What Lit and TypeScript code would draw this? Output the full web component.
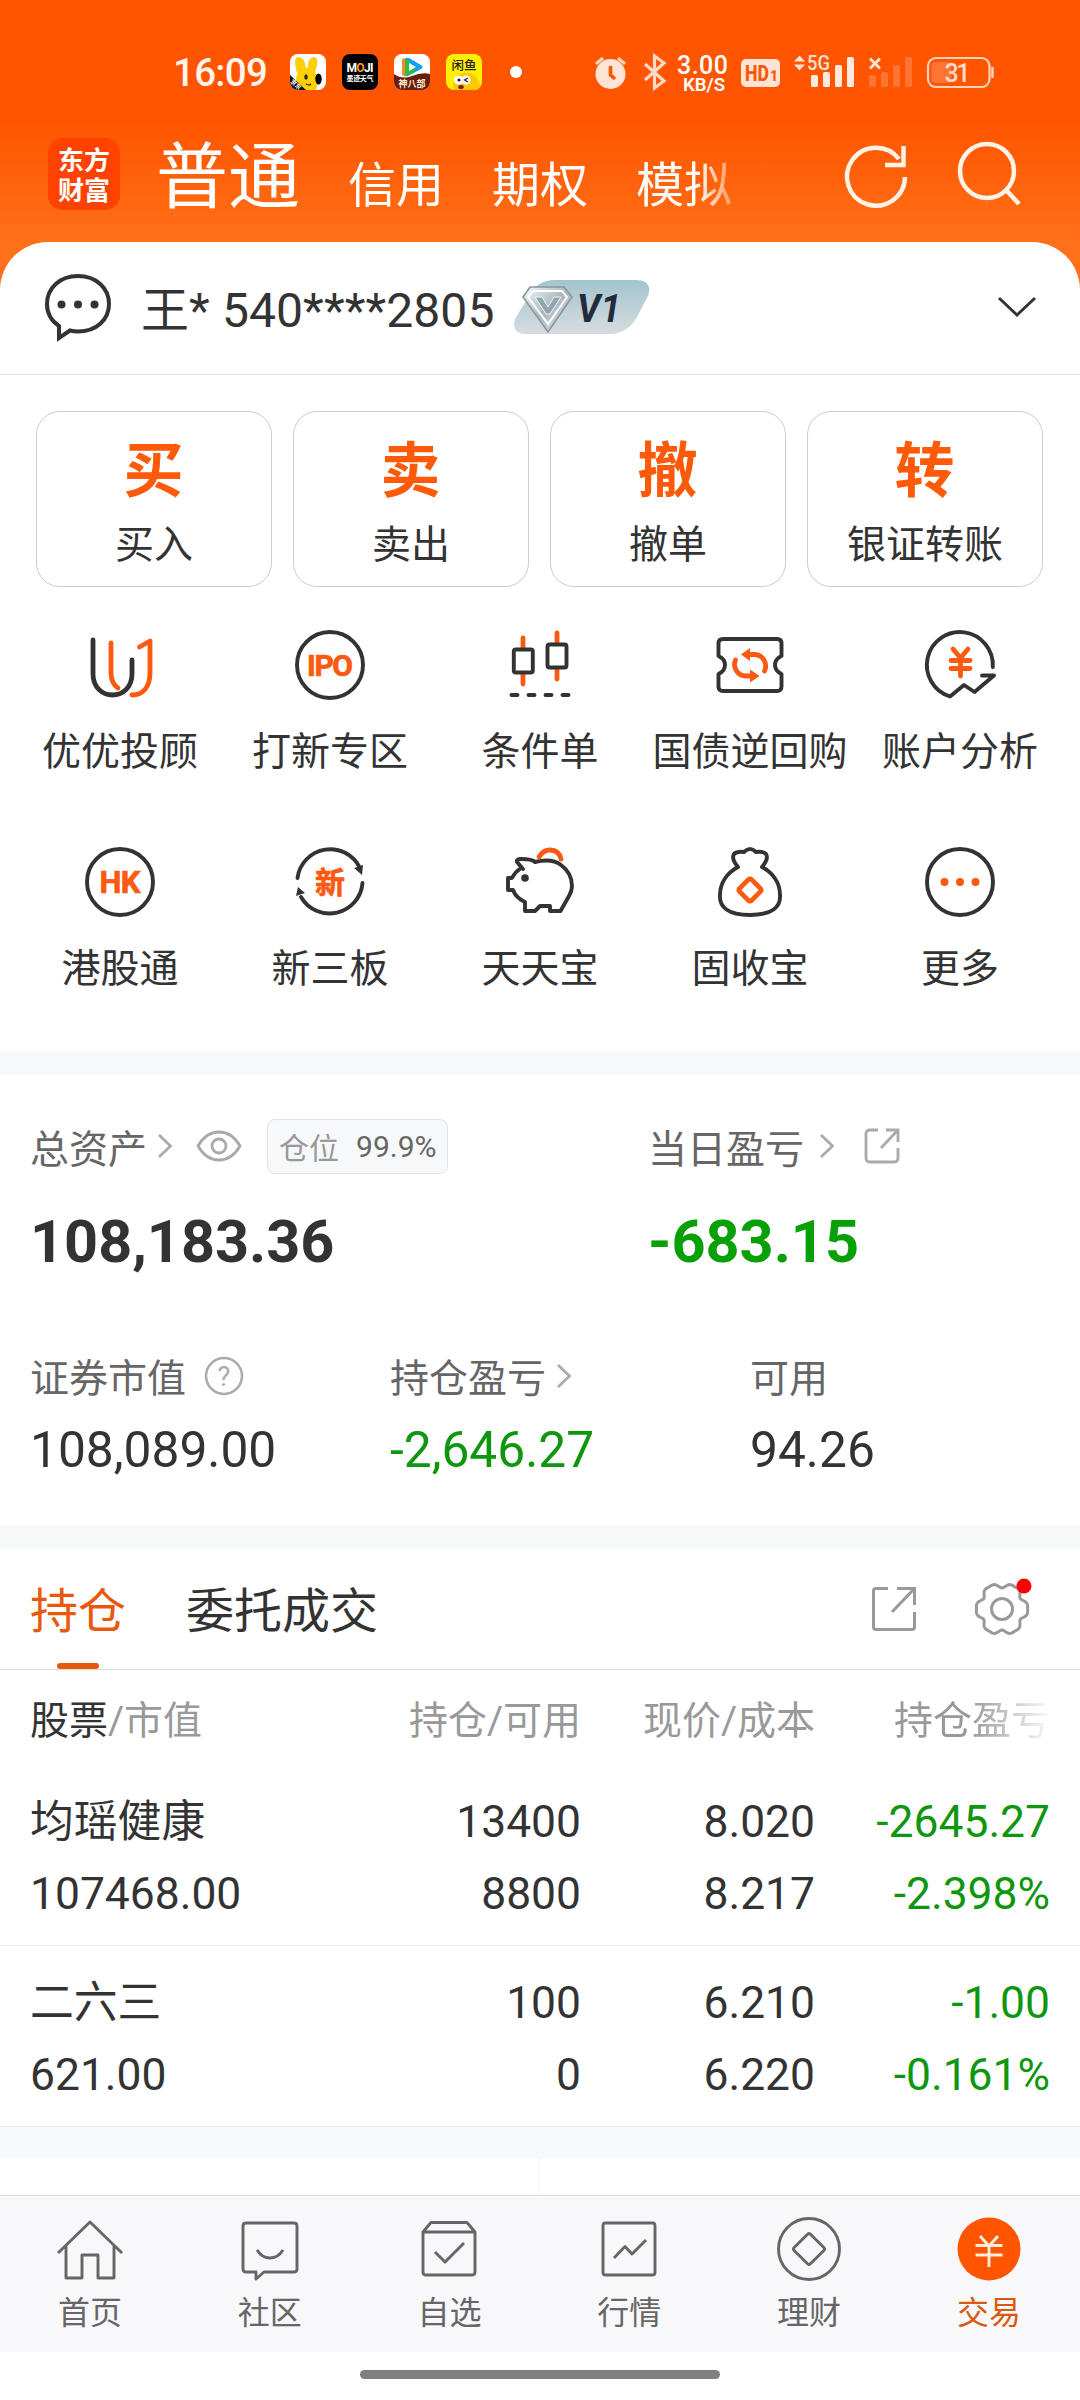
import { LitElement, html, css, svg } from "lit";
import { customElement } from "lit/decorators.js";
import { classMap } from "lit/directives/class-map.js";

const gearPath = (() => {
  const pts: string[] = [];
  for (let i = 0; i < 120; i++) {
    const a = (i / 120) * Math.PI * 2;
    const r = 24.2 + 2.3 * Math.cos(6 * a) - 0.9 * Math.cos(12 * a);
    pts.push(`${(r * Math.cos(a)).toFixed(2)} ${(r * Math.sin(a)).toFixed(2)}`);
  }
  return "M" + pts.join("L") + "Z";
})();

const ring = svg`<circle class="d" r="33"/>`;

const SERVICES = [
  {
    label: "优优投顾",
    icon: svg`<path class="d w" d="M-27-25V9C-27 22-18 30-7.500 30S12 22 12 9V-5"/>
      <path class="o w" d="M-9-22V8Q-9 18-2 23M19.500-18L30-24V8C30 22 23 30 12 30"/>`,
  },
  { label: "打新专区", icon: svg`${ring}<text class="t" y="11" font-size="30" textLength="46">IPO</text>` },
  {
    label: "条件单",
    icon: svg`<path class="o w" d="M-17-27V-17M-17 9V19M17-32V-22M17 4V14"/>
      <rect class="d" x="-26.200" y="-15.500" width="19" height="23" rx="2"/>
      <rect class="d" x="7.500" y="-20.500" width="19" height="23" rx="2"/>
      <path class="d" d="M-28.500 30H-22.500M-11.500 30H-5.500M5.500 30H11.500M22.500 30H28.500"/>`,
  },
  {
    label: "国债逆回购",
    icon: svg`<path class="d" d="M-27-26H27Q31.500-26 31.500-21.500V-9Q25-6 25 0T31.500 9V21.500Q31.500 26 27 26H-27Q-31.500 26-31.500 21.500V9Q-25 6-25 0T-31.500-9V-21.500Q-31.500-26-27-26Z"/>
      <path class="o w" d="M-3-10.500H4A11.500 11.500 0 0 1 14.500 6M-14.500-5A11.500 11.500 0 0 0-4 11H3"/>
      <path class="of" d="M-9-10.500L0-17V-4ZM9.500 11L0 4.500V17.500Z"/>`,
  },
  {
    label: "账户分析",
    icon: svg`<path class="d" d="M32.800 2A33 33 0 1 0-10 31.500L4 20L14.500 27L34 10.500H22"/>
      <path class="o w" d="M-7-16L.5-7L8-16M.5-7V11M-9-4.500H10M-9 3.500H10"/>`,
  },
  { label: "港股通", icon: svg`${ring}<text class="t" y="11" font-size="31" textLength="41">HK</text>` },
  {
    label: "新三板",
    icon: svg`<path class="d" d="M-32.500-4A33 33 0 0 1 30-14M32.500 1A33 33 0 0 1-29 15"/>
      <path class="df" d="M24-14L33-17L32-7ZM-34 14L-32 5L-25 11Z"/>
      <text class="t" y="11" font-size="30">新</text>`,
  },
  {
    label: "天天宝",
    icon: svg`<path class="d" d="M-17-13L-23-20Q-24-23-19-23Q-8-23-5-20Q12-24 21-17Q32-9 32 4Q32 9 29 14L20.500 29H10V24H0L-5 29H-15V20Q-24 16-27 8H-32V-4H-28Q-25-10-19-14"/>
      <circle class="df" cx="-15" cy="-4" r="3.800"/>
      <path class="o w" d="M-1-25Q3-32 10-32Q19-32 21-23"/>`,
  },
  {
    label: "固收宝",
    icon: svg`<path class="d" d="M-12-15Q-19-23-16-28Q-13-31-6-30Q0-36 6-30Q13-31 16-28Q19-23 12-15M-12-15C-23-9-30 1-30 13C-31 25-22 33 0 33S31 25 30 13C30 1 23-9 12-15"/>
      <rect class="o w" x="-8.500" y="-8.500" width="17" height="17" rx="2" transform="translate(0 8) rotate(45)"/>`,
  },
  {
    label: "更多",
    icon: svg`${ring}<g class="of"><circle cx="-15.500" r="4"/><circle r="4"/><circle cx="15.500" r="4"/></g>`,
  },
];

const TRADES = [
  ["买", "买入"],
  ["卖", "卖出"],
  ["撤", "撤单"],
  ["转", "银证转账"],
];

const HOLDINGS = [
  { name: "均瑶健康", value: "107468.00", qty: "13400", free: "8800", price: "8.020", cost: "8.217", pl: "-2645.27", pct: "-2.398%" },
  { name: "二六三", value: "621.00", qty: "100", free: "0", price: "6.210", cost: "6.220", pl: "-1.00", pct: "-0.161%" },
];

const TABS = [
  { label: "首页", icon: svg`<path d="M-32 4L0-27L32 4M-24-3V29H-8V6H8V29H24V-3"/>` },
  { label: "社区", icon: svg`<path d="M-24-26H24Q27-26 27-23V20Q27 23 24 23H-6L-14 30V23H-24Q-27 23-27 20V-23Q-27-26-24-26ZM-13 1Q-8 9 0 9T13 1"/>` },
  { label: "自选", icon: svg`<path d="M-26-17L-18-26.500H18L26-17V23Q26 26 23 26H-23Q-26 26-26 23ZM-26-17H26M-14 3L-4 13L15-6"/>` },
  { label: "行情", icon: svg`<rect x="-26" y="-26" width="52" height="52" rx="2.500"/><path d="M-15 9L-4-2.500L3 5L17-9"/>` },
  { label: "理财", icon: svg`<circle r="30.500"/><rect x="-11.500" y="-11.500" width="23" height="23" rx="2" transform="rotate(45)"/>` },
  { label: "交易", active: true, icon: svg`<circle class="fill" r="31.500"/><path class="yen" d="M-9-13L0-3L9-13M0-3V18M-13.500-3.500H13.500M-13.500 6H13.500"/>` },
];

@customElement("app-root")
export class AppRoot extends LitElement {
  static styles = css`
    :host {
      display: block;
      width: 1080px;
      height: 2400px;
      overflow: hidden;
      background: #fff;
      color: #333;
      font-family: Roboto, "Noto Sans CJK SC", sans-serif;
      font-size: 39px;
      font-weight: 400;
      white-space: nowrap;
    }
    * { box-sizing: border-box; }
    svg { display: block; flex: none; fill: none; overflow: visible; }
    .top {
      height: 300px;
      background: linear-gradient(#ff5500 0, #ff5500 122px, #ff7019 242px);
      color: #fff;
    }
    .status { height: 124px; padding: 42px 83px 22px 173px; display: flex; align-items: center; }
    .time { font-size: 38.500px; font-weight: 500; letter-spacing: -0.700px; width: 117px; color: #fff4ec; }
    .apps { display: flex; gap: 16px; }
    .dot { width: 12px; height: 12px; border-radius: 50%; background: #fff; margin-left: 28px; }
    .sys { margin-left: auto; }
    .nav { height: 118px; display: flex; align-items: center; padding-left: 48px; }
    .logo {
      width: 72px; height: 72px; margin-top: -18px; border-radius: 15px; background: #ff4200;
      font: 700 26px/30px "Noto Sans CJK SC", sans-serif; text-align: center; padding-top: 6px;
      white-space: normal;
    }
    .modes { display: flex; align-items: baseline; gap: 48px; margin-left: 36px; width: 594px; height: 118px; padding-top: 9px;
      -webkit-mask-image: linear-gradient(90deg, #000 540px, transparent 595px);
      mask-image: linear-gradient(90deg, #000 540px, transparent 595px); }
    .modes span { font-size: 48px; line-height: 90px; }
    .modes .on { font-size: 72px; }
    .tools { display: flex; gap: 39px; margin: -14px 0 0 90px; stroke: #fff3e6; stroke-width: 4.500px; }
    .sheet { margin-top: -58px; border-radius: 48px 48px 0 0; background: #fff; position: relative; }
    .account { height: 133px; border-bottom: 1px solid #e2e2e4; padding: 0 43px 2px 43px; display: flex; align-items: center; font-size: 48px; }
    .account .id { margin-left: 28px; width: 372px; letter-spacing: 0.100px; padding-bottom: 2px; }
    .account .down { margin-left: auto; }
    .trades { display: grid; grid-template-columns: repeat(4, 236px); column-gap: 21px; padding: 36px 36px 0; }
    .trade { height: 176px; border: 1.500px solid #ccc; border-radius: 24px; text-align: center; }
    .trade b { display: block; font-size: 60px; line-height: 78px; color: #ff5a0a; margin-top: 21px; font-weight: 700; padding-right: 1px; }
    .trade span { display: block; line-height: 50px; margin-top: 9px; }
    .services { display: grid; grid-template-columns: repeat(5, 210px); padding: 42px 15px 0; height: 464px; }
    .service { height: 217px; display: flex; flex-direction: column; align-items: center; }
    .service span { line-height: 50px; margin-top: 26px; }
    .d { stroke: #333; stroke-width: 3.900px; stroke-linecap: round; stroke-linejoin: round; }
    .o { stroke: #fb5a10; stroke-width: 4px; stroke-linecap: round; stroke-linejoin: round; }
    .w { stroke-width: 4.800px; }
    .of, .t { fill: #fb5a10; }
    .df { fill: #333; }
    .t { font-weight: 700; text-anchor: middle; stroke: #fb5a10; stroke-width: 0.700px; stroke-linejoin: round; }
    .band { height: 24px; background: #f7f8fa; }
    .assets { height: 450px; color: #666; }
    .chev { stroke: #aaa; stroke-width: 2.800px; }
    .row { display: flex; align-items: center; }
    .totals { display: grid; grid-template-columns: 618px 1fr; padding: 41px 0 0 30px; }
    .totals .row { height: 60px; }
    .eye { margin-left: 33px; }
    .tag { height: 55px; width: 181px; border: 1.500px solid #e3e4e7; border-radius: 8px; background: #f7f8fa; font-size: 30px; color: #666; display: flex; align-items: center; gap: 17px; margin-left: 25px; padding-left: 11px; }
    .tag i { font-style: normal; color: #999; }
    .big { font-size: 59.400px; font-weight: 700; line-height: 70px; margin-top: 31px; color: #333; }
    .loss { color: #0f960f; }
    .big.loss { color: #07a007; }
    .facts { display: grid; grid-template-columns: 360px 360px 1fr; padding: 68px 0 0 30px; }
    .facts .row { height: 60px; }
    .facts .num { font-size: 49.700px; line-height: 60px; margin-top: 15px; color: #333; }
    .facts .num.loss { color: #0f960f; }
    .tabs { height: 121px; border-bottom: 1.500px solid #dedede; padding: 0 50px 0 30px; display: flex; align-items: center; font-size: 48px; gap: 60px; }
    .tabs .cur { color: #e8590c; height: 120px; line-height: 126px; display: flex; flex-direction: column; align-items: center; }
    .tabs .cur::after { content: ""; width: 42px; height: 6px; border-radius: 3px; background: #e8590c; margin-top: -12px; }
    .tabs .other { height: 120px; line-height: 126px; }
    .tabs .acts { margin-left: auto; display: flex; gap: 57px; align-items: center; stroke: #999; stroke-width: 3px; }
    .cols { display: grid; grid-template-columns: 251px 300px 234px 235px; padding: 0 30px; text-align: right; }
    .cols > :first-child { text-align: left; }
    .head { height: 101px; line-height: 102px; color: #999; }
    .head b { font-weight: 400; color: #333; }
    .fade { -webkit-mask-image: linear-gradient(90deg, #000 155px, transparent 240px); mask-image: linear-gradient(90deg, #000 155px, transparent 240px); }
    .hold { height: 175px; font-size: 44.400px; line-height: 72px; padding-top: 15px; border-bottom: 1.500px solid #e9e9eb; }
    .hold + .hold { height: 181px; padding-top: 21px; }
    .hold .name { font-size: 43.800px; }
    .band.wide { height: 31px; }
    .peek { height: 37px; width: 540px; border-right: 1px solid #f4f4f4; }
    .bar { height: 157px; background: #f8f8fa; border-top: 1.500px solid #dcdddf; display: grid; grid-template-columns: repeat(6, 179.800px); padding-top: 17px; font-size: 32px; color: #666; }
    .bar div { display: flex; flex-direction: column; align-items: center; }
    .bar svg { stroke: #666; stroke-width: 2.900px; stroke-linejoin: round; }
    .bar span { line-height: 40px; margin-top: 8px; }
    .bar .active { color: #d9590f; }
    .bar .fill { fill: #ff5500; stroke: none; }
    .bar .yen { stroke: #ffeede; }
    .home { width: 360px; height: 9px; border-radius: 5px; background: #808080; margin: 18px auto 0; }
  `;

  private renderStatus() {
    return html`<div class="status">
      <div class="time">16:09</div>
      <div class="apps">
        <svg width="36" height="36" viewBox="0 0 36 36">
          <clipPath id="a"><rect width="36" height="36" rx="8"/></clipPath>
          <g clip-path="url(#a)"><rect width="36" height="36" fill="#fff"/>
            <path fill="#ffcf08" d="M8 36Q4 26 7.500 20Q2 3 9 3Q14.500 3 16 14H17.500Q18 3 24 3Q30 4 25 18Q30 26 26 36Z"/>
            <ellipse cx="28.500" cy="25" rx="3.200" ry="5.500" fill="#000"/><ellipse cx="16" cy="23" rx="1.700" ry="2.800" fill="#222"/>
            <path d="M16 30Q19 32 21 30" stroke="#222" stroke-width="1.200"/>
            <path d="M0 21L16 36H0Z" fill="#111"/><text x="-3" y="4" font-size="6" font-weight="700" fill="#fff" transform="translate(5 27) rotate(43)">京东</text></g>
        </svg>
        <svg width="36" height="36" viewBox="0 0 36 36">
          <rect width="36" height="36" rx="8" fill="#000"/>
          <text x="4.500" y="18" font-size="12" font-weight="700" fill="#fff" textLength="27">M<tspan fill="#f79a22">O</tspan>JI</text>
          <text x="4.500" y="27" font-size="7" font-weight="700" fill="#fff" textLength="27">墨迹天气</text>
        </svg>
        <svg width="36" height="36" viewBox="0 0 36 36">
          <clipPath id="b"><rect width="36" height="36" rx="8"/></clipPath>
          <g clip-path="url(#b)"><rect width="36" height="36" fill="#fff"/>
            <path d="M8 6Q8 3 12 5V22Q8 23 8 19Z" fill="#ff8a1e"/>
            <path d="M11 5Q12 3 15 4L27 11Q30 13 27 15L14 22Q11 23 11 20Z" fill="#18a0f0"/>
            <path d="M11 6V20Q12 22 15 21L22 17L13 5Z" fill="#28c040"/><path d="M15 9V17L22 13Z" fill="#fff"/>
            <path d="M0 20Q8 26 18 22T36 20V36H0Z" fill="#6b1c10"/>
            <text x="4.500" y="33" font-size="9" font-weight="700" fill="#fff0d0">神八部</text></g>
        </svg>
        <svg width="36" height="36" viewBox="0 0 36 36">
          <clipPath id="c"><rect width="36" height="36" rx="8"/></clipPath>
          <g clip-path="url(#c)"><rect width="36" height="36" fill="#fff000"/>
            <path d="M8 36Q5 20 18 19Q30 18 33 28L36 36Z" fill="#ffc60a"/>
            <circle cx="12.500" cy="26" r="4.500" fill="#fff"/><circle cx="20" cy="26" r="4.500" fill="#fff"/>
            <circle cx="13" cy="26" r="1.600" fill="#222"/><path d="M22 24L18.500 26L22 28" stroke="#222" stroke-width="1.300"/><ellipse cx="15" cy="33" rx="2.800" ry="2" fill="#7a1d08"/>
            <text x="5.500" y="15.500" font-size="12.500" font-weight="500" fill="#222">闲鱼</text></g>
        </svg>
      </div>
      <div class="dot"></div>
      <svg class="sys" width="402" height="40" viewBox="595 52 402 40" font-weight="500">
        <circle cx="610.500" cy="74" r="15" fill="#ffe4d6"/><path d="M610.500 66V75L615 79" stroke="#ff5500" stroke-width="3.600"/>
        <path d="M596 64L603 58M625 64L618 58" stroke="#ffd2ba" stroke-width="3.200"/>
        <path d="M645 64L664 81L654.500 88V56L664 63L645 80" stroke="#ffd9c6" stroke-width="3.200"/>
        <text x="677" y="74" font-size="25" fill="#fff" textLength="51">3.00</text>
        <text x="683" y="90.500" font-size="19" font-weight="600" fill="#fff" textLength="42" lengthAdjust="spacingAndGlyphs">KB/S</text>
        <rect x="741" y="59" width="39" height="28" rx="5" fill="#ffe4d6"/>
        <text x="745" y="81" font-size="22" font-weight="800" fill="#ff5500" textLength="24" lengthAdjust="spacingAndGlyphs">HD</text>
        <text x="770" y="81" font-size="14" font-weight="800" fill="#ff5500">1</text>
        <path d="M794 61.500L799.500 55.500L805 61.500ZM794 64.500L799.500 70.500L805 64.500Z" fill="#ffe4d6"/>
        <text x="807" y="70" font-size="21" fill="#ffe0cf" textLength="23" lengthAdjust="spacingAndGlyphs">5G</text>
        <g fill="#ffe9dd"><rect x="811" y="75" width="7" height="12" rx="1.500"/><rect x="823" y="72" width="7" height="15" rx="1.500"/><rect x="835" y="65" width="7" height="22" rx="1.500"/><rect x="847" y="57" width="7" height="30" rx="1.500"/></g>
        <path d="M870 58.500L880 68.500M880 58.500L870 68.500" stroke="#ffe4d6" stroke-width="3"/>
        <g fill="#ff7333"><rect x="869" y="75" width="7" height="12" rx="1.500"/><rect x="881" y="72" width="7" height="15" rx="1.500"/><rect x="893" y="65" width="7" height="22" rx="1.500"/><rect x="905" y="57" width="7" height="30" rx="1.500"/></g>
        <rect x="931.500" y="62" width="20" height="21" rx="4" fill="#ff7333"/>
        <rect x="928" y="58" width="61.500" height="29" rx="8" stroke="#ffd2ba" stroke-width="2.200"/>
        <path d="M992.500 67V78" stroke="#ffd2ba" stroke-width="2.500"/>
        <text x="944.500" y="81.500" font-size="25" fill="#ffdccb" textLength="26">31</text>
      </svg>
    </div>`;
  }

  private renderShare(size: number) {
    return html`<svg width=${size} height=${size} viewBox="0 0 46 46">
      <path d="M17 2.500H5Q2.500 2.500 2.500 5V41Q2.500 43.500 5 43.500H41Q43.500 43.500 43.500 41V26M26 2.500H43.500V19M43 3L21 26"/>
    </svg>`;
  }

  render() {
    return html`
      <div class="top">
        ${this.renderStatus()}
        <div class="nav">
          <div class="logo">东方<br />财富</div>
          <div class="modes"><span class="on">普通</span><span>信用</span><span>期权</span><span>模拟</span></div>
          <div class="tools">
            <svg width="72" height="72" viewBox="-36 -36 72 72">
              <path d="M29 1A29 29 0 1 1 23-17M27.500-30V-11H9"/>
            </svg>
            <svg width="72" height="72" viewBox="-36 -36 72 72"><circle cx="0" cy="-5" r="27"/><path d="M19 14L32 28"/></svg>
          </div>
        </div>
      </div>
      <div class="sheet">
        <div class="account">
          <svg width="70" height="70" viewBox="0 0 70 70">
            <path d="M16 54V66L27 58.500Q31 59.500 35 59.500C53 59.500 66 48 66 32S53 4 35 4S4 16 4 32Q4 46 16 54Z" stroke="#333" stroke-width="4"/>
            <g fill="#333"><circle cx="18.500" cy="32.500" r="4"/><circle cx="35" cy="32.500" r="4"/><circle cx="51.500" cy="32.500" r="4"/></g>
          </svg>
          <div class="id">王* 540****2805</div>
          <svg width="138" height="56" viewBox="0 0 138 56">
            <defs>
              <linearGradient id="bg" x2="0" y2="1"><stop stop-color="#a3c5cf"/><stop offset="1" stop-color="#d6dcdf"/></linearGradient>
              <linearGradient id="dm" x2="1" y2="1"><stop stop-color="#f4fbfc"/><stop offset=".5" stop-color="#a9b7bd"/><stop offset="1" stop-color="#e4edf0"/></linearGradient>
            </defs>
            <path d="M42 1H124Q140 2 135 17L124 38Q115 54 98 55H12Q-2 54 2 40L16 17Q24 1 42 1Z" fill="url(#bg)"/>
            <path d="M17 8H51L59 18L35 53L10 18Z" fill="url(#dm)" stroke="#87959b" stroke-width="1.500"/>
            <path d="M20 12H49L54 18L35 45L15 18Z" stroke="#fff" stroke-width="2"/>
            <path d="M22 18H29L35 28L41 18H48L37 35H33Z" fill="#93a5ad" stroke="#eef6f8" stroke-width="1"/>
            <text x="64" y="43" font-size="39" font-weight="700" font-style="italic" fill="#222a3c" textLength="44" lengthAdjust="spacingAndGlyphs">V1</text>
          </svg>
          <svg class="down" width="40" height="24" viewBox="0 0 40 24"><path d="M2 3L20 20L38 3" stroke="#333" stroke-width="3"/></svg>
        </div>
        <div class="trades">
          ${TRADES.map(([g, l]) => html`<div class="trade"><b>${g}</b><span>${l}</span></div>`)}
        </div>
        <div class="services">
          ${SERVICES.map((s) => html`<div class="service"><svg width="72" height="72" viewBox="-36 -36 72 72">${s.icon}</svg><span>${s.label}</span></div>`)}
        </div>
      </div>
      <div class="band"></div>
      <div class="assets">
        <div class="totals">
          <div>
            <div class="row">总资产
              <svg class="chev" width="16" height="26" viewBox="-10 0 16 26"><path d="M2 2L13.500 13L2 24"/></svg>
              <svg class="eye" width="46" height="32" viewBox="0 0 46 32" stroke="#aaa" stroke-width="2.800">
                <path d="M2 16Q10 2 23 2T44 16Q36 30 23 30T2 16Z"/><circle cx="23" cy="16" r="7"/></svg>
              <div class="tag"><i>仓位</i>99.9%</div>
            </div>
            <div class="big">108,183.36</div>
          </div>
          <div>
            <div class="row">当日盈亏<svg class="chev" width="60" height="26" viewBox="-15 0 60 26"><path d="M2 2L13.500 13L2 24"/></svg>
              <svg width="36" height="36" viewBox="0 0 36 36" stroke="#aaa" stroke-width="2.800"><path d="M14 2H6Q2 2 2 6V30Q2 34 6 34H30Q34 34 34 30V20M22 2H34V14M33 3L17 20"/></svg></div>
            <div class="big loss">-683.15</div>
          </div>
        </div>
        <div class="facts">
          <div>
            <div class="row">证券市值<svg width="58" height="40" viewBox="-18 -1 58 40"><circle cx="20" cy="20" r="18" stroke="#aaa" stroke-width="2.500"/><text x="20" y="29.500" font-size="27" text-anchor="middle" fill="#aaa">?</text></svg></div>
            <div class="num">108,089.00</div>
          </div>
          <div>
            <div class="row">持仓盈亏<svg class="chev" width="26" height="26" viewBox="-10 -1 26 26"><path d="M2 2L13.500 13L2 24"/></svg></div>
            <div class="num loss">-2,646.27</div>
          </div>
          <div>
            <div class="row">可用</div>
            <div class="num">94.26</div>
          </div>
        </div>
      </div>
      <div class="band"></div>
      <div class="tabs">
        <div class="cur">持仓</div>
        <div class="other">委托成交</div>
        <div class="acts">
          ${this.renderShare(46)}
          <svg width="56" height="56" viewBox="-28 -28 56 56"><path d=${gearPath}/><circle r="10.500"/><circle cx="22" cy="-23" r="7.500" fill="#f00" stroke="none"/></svg>
        </div>
      </div>
      <div class="cols head">
        <div><b>股票</b>/市值</div><div>持仓/可用</div><div>现价/成本</div><div class="fade">持仓盈亏</div>
      </div>
      ${HOLDINGS.map((h) => html`<div class="cols hold">
        <div><div class="name">${h.name}</div><div>${h.value}</div></div>
        <div>${h.qty}<br />${h.free}</div>
        <div>${h.price}<br />${h.cost}</div>
        <div class="loss">${h.pl}<br />${h.pct}</div>
      </div>`)}
      <div class="band wide"></div>
      <div class="peek"></div>
      <div class="bar">
        ${TABS.map((t) => html`<div class=${classMap({ active: !!t.active })}><svg width="72" height="72" viewBox="-36 -36 72 72">${t.icon}</svg><span>${t.label}</span></div>`)}
      </div>
      <div class="home"></div>
    `;
  }
}
